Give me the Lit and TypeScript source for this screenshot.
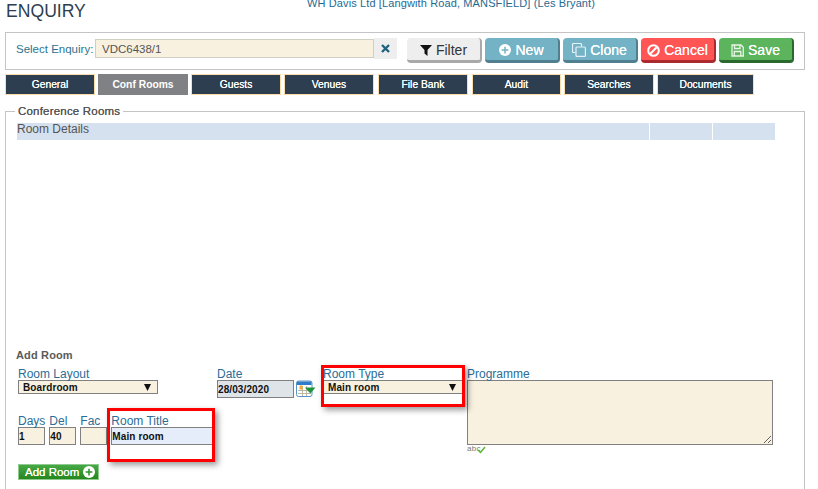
import { LitElement, html, css } from "lit";
import { customElement } from "lit/decorators.js";

const tabs = ["General", "Conf Rooms", "Guests", "Venues", "File Bank", "Audit", "Searches", "Documents"];

@customElement("app-root")
export class AppRoot extends LitElement {
  static styles = css`
    :host { display: block; position: relative; width: 818px; height: 489px; overflow: hidden; background: #fff; font-family: "Liberation Sans", Arial, sans-serif; color: #555; }
    * { box-sizing: border-box; }
    .head { display: grid; grid-template-columns: 301px auto; height: 32px; padding-left: 6px; }
    .page { font-size: 17.6px; line-height: 21px; color: #2d3e50; margin-top: 1px; }
    .who { font-size: 11px; line-height: 13px; margin-top: -3px; color: #1d6a93; letter-spacing: .12px; white-space: nowrap; }
    .bar { display: flex; align-items: flex-start; width: 800px; height: 38px; margin-left: 5px; padding: 5px 10px; border: 1px solid #c4c4c4; }
    .bar > * { flex: none; }
    .bar label { font-size: 11.5px; line-height: 22px; color: #2b7391; width: 79px; white-space: nowrap; }
    .enq { width: 279px; height: 19px; margin-top: 1px; border: 1px solid #cfcfc4; background: #f8f1e0; font: 11.5px "Liberation Sans", sans-serif; color: #555; padding: 1px 6px 0; outline: none; }
    .clr { width: 23px; height: 21px; background: #eee; display: flex; align-items: center; justify-content: center; margin-right: 10px; }
    .btn { display: flex; align-items: center; justify-content: center; gap: 4px; width: 75px; height: 25px; margin-right: 3px; padding-top: 2px; border-radius: 4px; font-size: 14px; color: #fff; white-space: nowrap; text-shadow: 0 0 .6px #fff; }
    .filter { background: #eee; color: #333; text-shadow: none; border-right: 2px solid #a9a9a9; border-bottom: 3px solid #a9a9a9; }
    .info { background: #74b3c6; border-right: 2px solid #50808f; border-bottom: 3px solid #50808f; }
    .cancel { background: #ff5555; border-right: 2px solid #ab2a30; border-bottom: 3px solid #ab2a30; }
    .save { background: #5cb45c; border-right: 2px solid #2a6a2e; border-bottom: 3px solid #2a6a2e; margin-right: 0; }
    .tabs { display: flex; gap: 3px; margin: 4px 0 0 5px; }
    .tab { width: 90px; height: 21px; background: #2c3e50; border: 1px solid #fbdcab; color: #fff; font-size: 10.3px; line-height: 20px; text-align: center; text-shadow: 0 0 .6px #fff; }
    .tab.on { background: #808185; border-color: #808185; font-weight: bold; text-shadow: none; }
    .tab.w { width: 97px; }
    .tab.n { margin-left: 1px; }
    .tab.s { width: 89px; }
    fieldset { display: block; width: 800px; height: 420px; margin: 9px 0 0 5px; padding: 5px 11px; border: 1px solid #c4c4c4; min-width: 0; }
    legend { font-size: 11.5px; line-height: 14px; color: #555; padding: 0 3px; margin-left: -2px; letter-spacing: .2px; font-weight: normal; text-shadow: 0 0 .5px #555; }
    .thead { display: grid; grid-template-columns: 632px 62px 62px; gap: 1px; width: 758px; }
    .thead div { height: 17px; background: #d6e1ef; font-size: 12px; line-height: 13px; color: #555; }
    .sub { font-size: 11px; line-height: 13px; font-weight: bold; color: #5a5a5a; margin: 209px 0 0 -1px; letter-spacing: .15px; }
    .form { display: grid; grid-template-columns: 199px 106px 144px 306px; grid-template-rows: 47px 30px 40px; margin: 5px 0 0 1px; }
    .lab { font-size: 12px; line-height: 15px; height: 13px; color: #2a6d96; display: block; white-space: nowrap; }
    .sel { display: flex; align-items: center; justify-content: space-between; width: 140px; height: 14px; border: 1px solid #808080; background: #f8f1e0; padding: 0 6px 0 4px; font-size: 10px; font-weight: bold; letter-spacing: .1px; color: #111; }
    input.f { display: block; height: 18px; border: 1px solid #808080; background: #f8f1e0; padding: 0; font: bold 10px "Liberation Sans", sans-serif; letter-spacing: .1px; color: #111; outline: none; border-radius: 0; }
    .date { display: flex; gap: 2px; align-items: flex-start; }
    .date input.f { width: 77px; background: #dfe4e9; }
    .small { display: flex; gap: 4px; grid-column: 1; }
    .small input.f { width: 27px; }
    .small input.t { width: 102px; background: #e5edfa; }
    .prog { grid-column: 4; grid-row: 1 / span 2; }
    textarea { display: block; width: 306px; height: 65px; border: 1px solid #808080; background: #f8f1e0; outline: none; border-radius: 0; margin: 0; padding: 0; }
    .spell { grid-column: 4; grid-row: 3; display: flex; height: 10px; font-size: 8px; line-height: 9px; color: #777; letter-spacing: .3px; }
    .spell svg { margin: 2px 0 0 -4px; }
    .add { grid-column: 1; grid-row: 3; display: flex; align-items: center; gap: 4px; width: 81px; height: 16px; margin-top: 20px; padding-left: 6px; background: linear-gradient(#47a847, #26871f); border: 1px solid #8fcb8f; font-size: 11.5px; color: #fff; white-space: nowrap; text-shadow: 0 0 .5px #fff; }
    .mark { position: absolute; border: 3px solid #f00; box-shadow: 3px 3px 6px rgba(0, 0, 0, .4); }
    .m1 { left: 321px; top: 365px; width: 144px; height: 42px; }
    .m2 { left: 107px; top: 408px; width: 108px; height: 54px; }
  `;

  private circlePlus(size: number, fg: string, bg: string) {
    return html`<svg width=${size} height=${size} viewBox="0 0 16 16"><circle cx="8" cy="8" r="8" fill=${bg}/><path d="M7 3.500h2V7h3.500v2H9v3.500H7V9H3.500V7H7z" fill=${fg}/></svg>`;
  }

  private arrow() {
    return html`<svg width="7" height="7" viewBox="0 0 7 7"><path d="M0 0h7L3.500 7z" fill="#111"/></svg>`;
  }

  render() {
    return html`
      <div class="head"><div class="page">ENQUIRY</div><div class="who">WH Davis Ltd [Langwith Road, MANSFIELD] (Les Bryant)</div></div>
      <div class="bar">
        <label>Select Enquiry:</label>
        <input class="enq" .value=${"VDC6438/1"} />
        <div class="clr"><svg width="9" height="9" viewBox="0 0 9 9"><path d="M1 1l7 7M8 1L1 8" stroke="#20627f" stroke-width="2.400" fill="none"/></svg></div>
        <div class="btn filter"><svg width="12" height="12" viewBox="0 0 12 12"><path d="M0 1h12L7.500 6v6L4.500 9.500V6z" fill="#111"/></svg>Filter</div>
        <div class="btn info">${this.circlePlus(12, "#74b3c6", "#fff")}New</div>
        <div class="btn info"><svg width="14" height="14" viewBox="0 0 14 14" fill="none" stroke="#e6f1f5" stroke-width="1.200"><path d="M9.500 3.500V1.500a1 1 0 0 0-1-1h-7a1 1 0 0 0-1 1v7a1 1 0 0 0 1 1h2"/><rect x="4" y="4" width="9.400" height="9.400" rx="1"/></svg>Clone</div>
        <div class="btn cancel"><svg width="13" height="13" viewBox="0 0 13 13" fill="none" stroke="#fff" stroke-width="2"><circle cx="6.500" cy="6.500" r="5.300"/><path d="M2.800 10.200l7.400-7.400"/></svg>Cancel</div>
        <div class="btn save"><svg width="13" height="13" viewBox="0 0 13 13" fill="none" stroke="#e8f5e8" stroke-width="1.300"><path d="M1 1h9l2.300 2.300V12H1z"/><path d="M3.500 1v3.500h5.500V1M3.300 12V7.500h6.500V12"/></svg>Save</div>
      </div>
      <div class="tabs">
        ${tabs.map((t, i) => html`<div class="tab ${i === 1 ? "on" : ""} ${i === 7 ? "w" : ""} ${i === 4 || i === 5 ? "n" : ""} ${i === 5 ? "s" : ""}">${t}</div>`)}
      </div>
      <fieldset>
        <legend>Conference Rooms</legend>
        <div class="thead"><div>Room Details</div><div></div><div></div></div>
        <div class="sub">Add Room</div>
        <div class="form">
          <div>
            <span class="lab">Room Layout</span>
            <div class="sel">Boardroom ${this.arrow()}</div>
          </div>
          <div>
            <span class="lab">Date</span>
            <div class="date">
              <input class="f" .value=${"28/03/2020"} />
              <svg width="20" height="18" viewBox="0 0 20 18">
                <rect x=".5" y="1" width="15.500" height="15.500" rx="2" fill="#fff" stroke="#5b93c9"/>
                <rect x="1" y="1.500" width="14.500" height="3.500" fill="#2f7cc8"/>
                <path d="M2 10.500h13M2 13.500h13M6.500 6v10M10.500 6v10" stroke="#b9b9a8"/>
                <rect x="3.500" y="5.500" width="3" height="4" fill="#f4a836"/>
                <path d="M9 7.500h10.500l-5.200 6z" fill="#1f9438"/>
              </svg>
            </div>
          </div>
          <div>
            <span class="lab">Room Type</span>
            <div class="sel">Main room ${this.arrow()}</div>
          </div>
          <div class="prog">
            <span class="lab">Programme</span>
            <textarea></textarea>
          </div>
          <div class="small">
            <div><span class="lab">Days</span><input class="f" .value=${"1"} /></div>
            <div><span class="lab">Del</span><input class="f" .value=${"40"} /></div>
            <div><span class="lab">Fac</span><input class="f" /></div>
            <div><span class="lab">Room Title</span><input class="f t" .value=${"Main room"} /></div>
          </div>
          <div class="add">Add Room ${this.circlePlus(12, "#2f8f2a", "#fff")}</div>
          <div class="spell">abc<svg width="9" height="8" viewBox="0 0 9 8"><path d="M1 4l2.500 2.500L8 1" stroke="#5fb22e" stroke-width="1.500" fill="none"/></svg></div>
        </div>
      </fieldset>
      <div class="mark m1"></div>
      <div class="mark m2"></div>
    `;
  }
}
